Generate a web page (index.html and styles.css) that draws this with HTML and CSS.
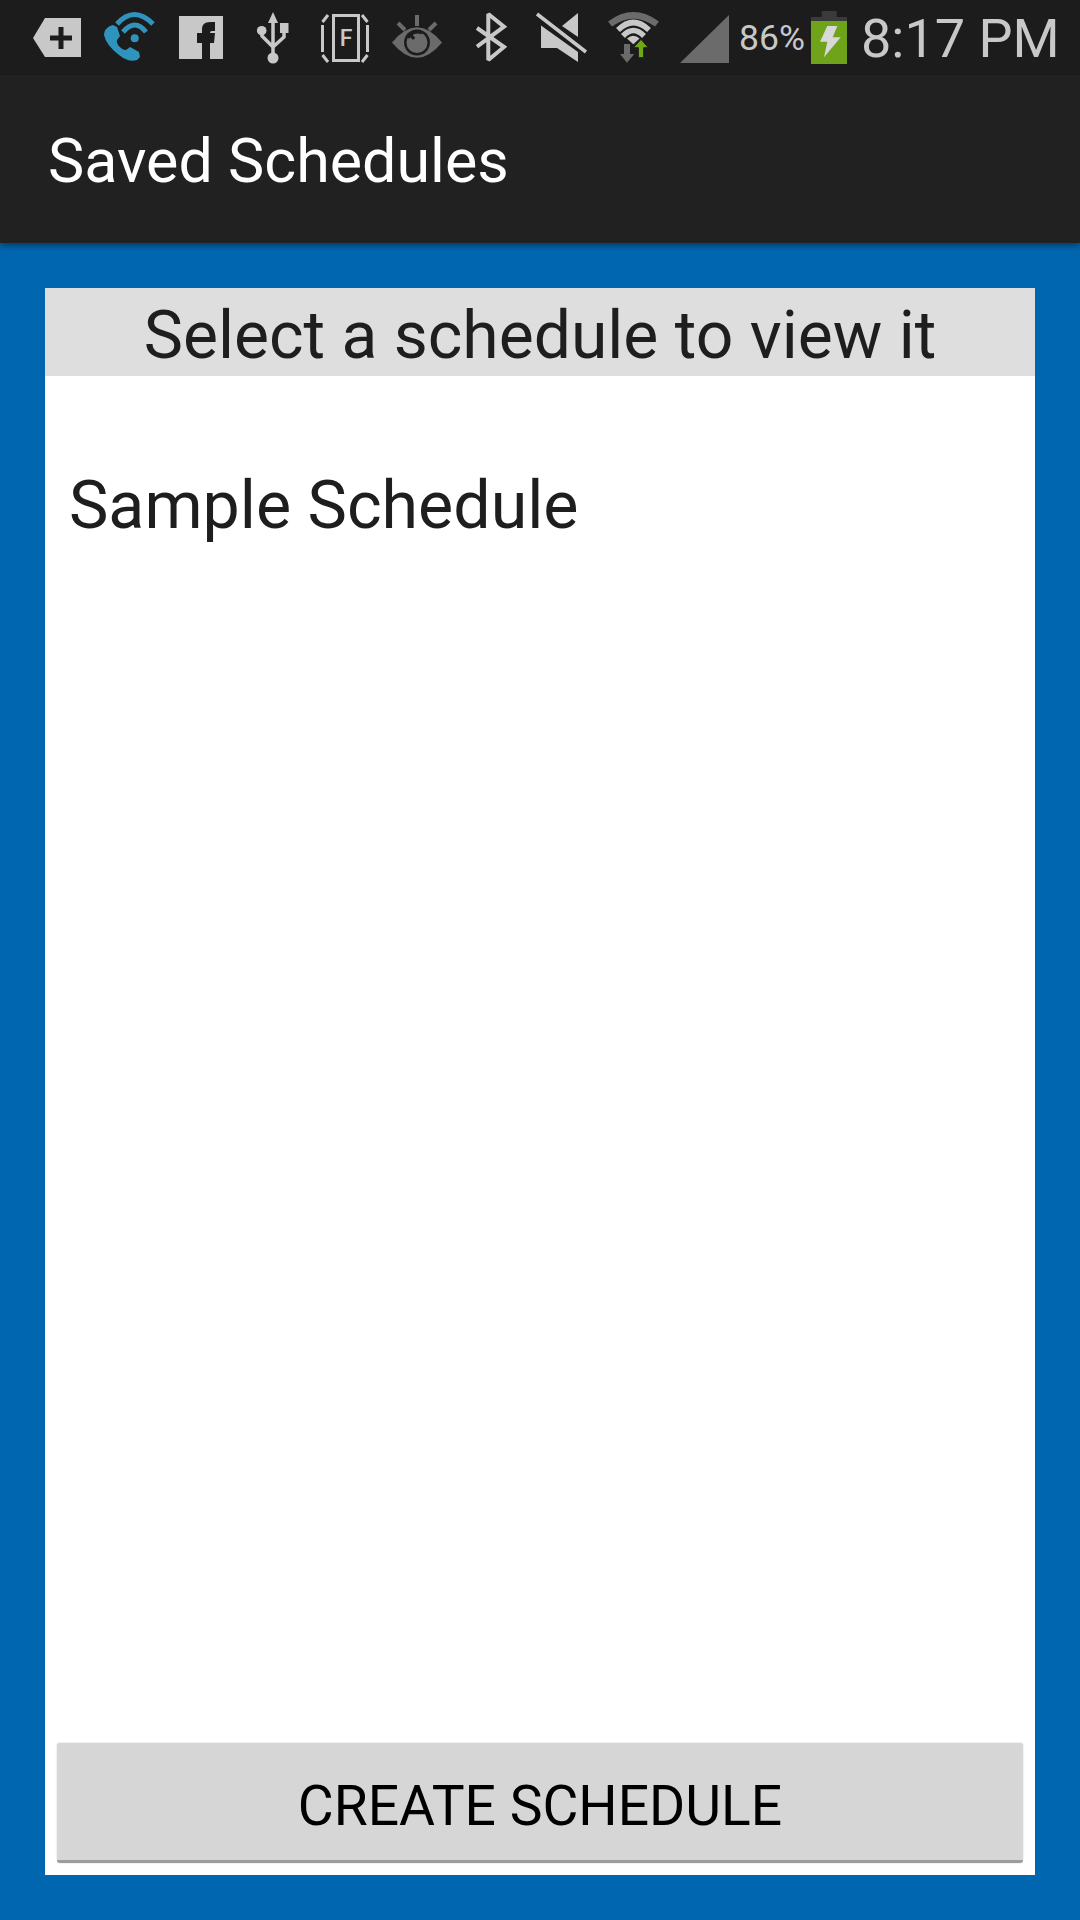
FILE: index.html
```html
<!DOCTYPE html>
<html lang="en">
<head>
    <meta charset="UTF-8">
    <meta name="viewport" content="width=device-width, initial-scale=1.0">
    <title>Saved Schedules</title>
    <link rel="stylesheet" href="styles.css">
</head>
<body>
    <div class="status-bar">
        <div class="status-icons">
            <!-- notification icons, each one in a 72px slot -->
            <svg class="slot" viewBox="0 0 72 75">
                <path class="light" d="M12,38 L24,18 H60 V57 H24 Z"/>
                <path class="cutout" d="M37.5,27 H42.5 V35.5 H51 V40.5 H42.5 V49 H37.5 V40.5 H29 V35.5 H37.5 Z"/>
            </svg>
            <svg class="slot" viewBox="0 0 72 75">
                <path class="call" d="M17,26 L20,25 L24,27 L27,36 L24,40 Q23,42 25,45 Q29,50 33,50 L37,47 L46,52 L47,57 L44,60 Q36,63 26,55 Q13,45 11,35 Q11,29 17,26 Z"/>
                <path class="call-line" d="M24,24 Q41,5 60,24"/>
                <path class="call-line" d="M30,32 Q42,18 53,32"/>
                <circle class="call" cx="41.7" cy="38.3" r="4"/>
            </svg>
            <svg class="slot" viewBox="0 0 72 75">
                <rect class="light" x="14" y="16" width="44" height="43"/>
                <path class="cutout" d="M37,59 V43 H32 V33 H37 V29 Q37,22 45,22 H50 V31 H47 Q45,31 45,33 H50 L49,43 H45 V59 Z"/>
            </svg>
            <svg class="slot" viewBox="0 0 72 75">
                <path class="light" d="M36,12 L41,23 H31 Z"/>
                <path class="line" d="M36,20 V55 M25,31 V36 L36,47 M47,31 V37 L36,47"/>
                <circle class="light" cx="24.7" cy="30.7" r="4.8"/>
                <rect class="light" x="43" y="23" width="8.5" height="10"/>
                <circle class="light" cx="36" cy="58" r="5.5"/>
            </svg>
            <svg class="slot" viewBox="0 0 72 75">
                <rect class="frame" x="24.5" y="15.5" width="25" height="45"/>
                <path class="frame" d="M19,15 L13.5,22 M13.5,25 V52 M13.5,55 L19,62"/>
                <path class="frame" d="M53,15 L58.5,22 M58.5,25 V52 M58.5,55 L53,62"/>
                <text class="icon-letter" x="37" y="46">F</text>
            </svg>
            <svg class="slot" viewBox="0 0 72 75">
                <path class="dim-line" d="M36,15 V26 M17,23 L24,30 M55,23 L48,30"/>
                <path class="dim" d="M11,42.5 Q36,12 61,42.5 Q36,73 11,42.5 Z"/>
                <circle class="cutout" cx="36" cy="42.5" r="13"/>
                <circle class="dim" cx="36" cy="42.5" r="10.5"/>
                <path class="eye-slit" d="M29,34 L33,39 M41,33 A10.5,10.5 0 0 0 27,38"/>
                <circle class="dim" cx="36.5" cy="43" r="5"/>
            </svg>
            <svg class="slot" viewBox="0 0 72 75">
                <path class="bt" d="M24,28 L51,47 L35.3,60 V14 L51,26.7 L24,46.7"/>
            </svg>
            <svg class="slot" viewBox="0 0 72 75">
                <path class="light" d="M37,26 L53,13 V37 Z"/>
                <path class="light" d="M16,25.5 V48 H32 L53,62 V52 Z"/>
                <path class="line" d="M12,14 L61,52"/>
            </svg>
            <svg class="slot" viewBox="0 0 72 75">
                <path class="fan-dim" d="M13,24 Q36.3,6.6 60,24"/>
                <path class="fan" d="M21,30 Q36.3,15 52,30"/>
                <path class="fan" d="M26,36 Q36.3,25 47,36"/>
                <path class="light" d="M36.3,44.3 L30,38.6 Q36.3,33 42.6,38.6 Z"/>
                <path class="arrow-down" d="M27,44 H33 V54 H37.3 L30,62.7 L23,54 H27 Z"/>
                <path class="arrow-up" d="M44,39.3 L51.3,47.7 H46.7 V57.7 H41.3 V47.7 H36.3 Z"/>
            </svg>
            <svg class="slot" viewBox="0 0 72 75">
                <path class="dim" d="M11,63 H60 V15 Z"/>
            </svg>
        </div>
        <span class="battery-pct">86%</span>
        <svg class="battery" viewBox="0 0 36 75">
            <rect class="battery-cap" x="10.7" y="11" width="15" height="6"/>
            <rect class="battery-cap" x="0" y="17" width="36" height="4"/>
            <rect class="battery-level" x="0" y="21" width="36" height="43"/>
            <path class="bolt" d="M16.3,26 H26.3 L21.7,37.3 H29.7 L13,57.3 L16.3,41.7 H9 Z"/>
        </svg>
        <span class="clock">8:17 PM</span>
    </div>

    <div class="action-bar">
        <h1>Saved Schedules</h1>
    </div>

    <div class="content">
        <div class="card">
            <div class="card-header">Select a schedule to view it</div>
            <ul class="schedule-list">
                <li>Sample Schedule</li>
            </ul>
            <button class="create-button">CREATE SCHEDULE</button>
        </div>
    </div>
</body>
</html>
```

FILE: styles.css
```css
* {
    box-sizing: border-box;
}

body {
    font-family: Roboto, "Liberation Sans", sans-serif;
    background-color: #0066b0;
    display: flex;
    flex-direction: column;
    width: 1080px;
    height: 1920px;
    margin: 0;
    overflow: hidden;
}

.status-bar {
    display: flex;
    align-items: flex-start;
    flex: none;
    height: 75px;
    padding-left: 21px;
    background-color: #1c1c1c;
    color: #c8c8c8;
}

.status-icons {
    display: flex;
    flex: none;
}

.slot {
    display: block;
    flex: none;
    width: 72px;
    height: 75px;
}

.light { fill: #c8c8c8; }
.dim { fill: #6b6b6b; }
.cutout { fill: #1c1c1c; }
.call { fill: #2f94bd; }
.call-line { fill: none; stroke: #2f94bd; stroke-width: 5; }
.line { fill: none; stroke: #c8c8c8; stroke-width: 3.5; }
.dim-line { fill: none; stroke: #6b6b6b; stroke-width: 4; }
.frame { fill: none; stroke: #c8c8c8; stroke-width: 3; }
.icon-letter { fill: #c8c8c8; font-size: 23px; font-weight: 500; text-anchor: middle; }
.eye-slit { fill: none; stroke: #1c1c1c; stroke-width: 3; }
.bt { fill: none; stroke: #c8c8c8; stroke-width: 4; stroke-miterlimit: 2; }
.fan { fill: none; stroke: #c8c8c8; stroke-width: 5.5; }
.fan-dim { fill: none; stroke: #6b6b6b; stroke-width: 6.5; }
.arrow-down { fill: #6b6b6b; }
.arrow-up { fill: #6fa814; stroke: #1c1c1c; stroke-width: 1; }

.battery-pct {
    margin-left: -2px;
    margin-top: 19px;
    width: 72px;
    font-size: 35.5px;
    line-height: 39px;
}

.battery {
    display: block;
    flex: none;
    width: 36px;
    height: 75px;
}

.battery-cap { fill: #3a3a3a; }
.battery-level { fill: #6fa41a; }
.bolt { fill: #d8d8d8; }

.clock {
    margin-left: 14px;
    margin-top: 7px;
    font-size: 54px;
    line-height: 64px;
    font-weight: 400;
    white-space: nowrap;
}

.action-bar {
    display: flex;
    align-items: center;
    flex: none;
    height: 168px;
    padding: 3px 0 0 48px;
    background-color: #212121;
    box-shadow: 0 3px 6px rgba(0, 0, 0, 0.4);
    position: relative;
}

.action-bar h1 {
    margin: 0;
    color: #ffffff;
    font-size: 61px;
    font-weight: 400;
}

.content {
    display: flex;
    flex: 1;
    padding: 45px;
}

.card {
    display: flex;
    flex-direction: column;
    flex: 1;
    background-color: #ffffff;
}

.card-header {
    height: 88px;
    padding-top: 4px;
    background-color: #dedede;
    color: #1e1e1e;
    font-size: 66px;
    line-height: 88px;
    text-align: center;
}

.schedule-list {
    flex: 1;
    margin: 0;
    padding: 0;
    list-style: none;
}

.schedule-list li {
    padding: 90px 24px 0;
    color: #1e1e1e;
    font-size: 66.3px;
    line-height: 78px;
}

.create-button {
    display: block;
    flex: none;
    height: 120px;
    margin: 0 12px 12px;
    padding: 9px 0 0;
    border: none;
    border-bottom: 3px solid #9d9d9d;
    border-radius: 3px;
    background-color: #d6d6d6;
    box-shadow: 0 0 2px rgba(0, 0, 0, 0.2);
    color: #000000;
    font-family: Roboto, "Liberation Sans", sans-serif;
    font-size: 55.2px;
}
```
